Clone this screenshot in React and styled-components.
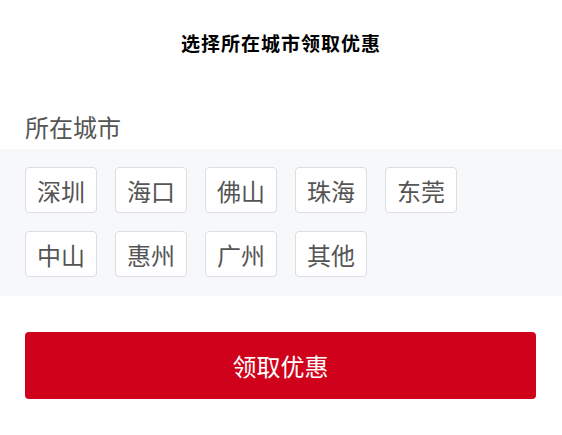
import React from "react";
import styled, { createGlobalStyle } from "styled-components";

const GlobalStyle = createGlobalStyle`
  body {
    margin: 0;
    background: #fff;
    font-family: "Noto Sans CJK SC", "Noto Sans", sans-serif;
  }
`;

const Page = styled.div`
  width: 562px;
`;

const Title = styled.h2`
  margin: 0;
  height: 86px;
  line-height: 86px;
  text-align: center;
  font-size: 19px;
  font-weight: 700;
  letter-spacing: 1px;
  color: #000;
`;

const Label = styled.div`
  margin-top: 19px;
  padding-left: 25px;
  height: 44px;
  line-height: 44px;
  font-size: 24px;
  color: #555;
`;

const CityPanel = styled.div`
  display: grid;
  grid-template-columns: repeat(5, 72px);
  column-gap: 18px;
  row-gap: 18px;
  padding: 18px 25px 19px;
  background: #f7f8fa;
`;

const CityTag = styled.button`
  box-sizing: border-box;
  height: 46px;
  padding: 0;
  border: 1px solid ${({ active }) => (active ? "#d0021b" : "#dcdee3")};
  border-radius: 4px;
  background: #fff;
  font-family: inherit;
  font-size: 24px;
  color: ${({ active }) => (active ? "#d0021b" : "#555")};
  cursor: pointer;
`;

const SubmitButton = styled.button`
  display: block;
  box-sizing: border-box;
  width: 511px;
  height: 67px;
  margin: 36px 0 0 25px;
  border: none;
  border-radius: 4px;
  background: #d0021b;
  color: #fff;
  font-family: inherit;
  font-size: 24px;
  cursor: pointer;
`;

const cities = ["深圳", "海口", "佛山", "珠海", "东莞", "中山", "惠州", "广州", "其他"];

export default function App() {
  return (
    <Page>
      <GlobalStyle />
      <Title>选择所在城市领取优惠</Title>
      <Label>所在城市</Label>
      <CityPanel>
        {cities.map((city) => (
          <CityTag key={city}>{city}</CityTag>
        ))}
      </CityPanel>
      <SubmitButton>领取优惠</SubmitButton>
    </Page>
  );
}
